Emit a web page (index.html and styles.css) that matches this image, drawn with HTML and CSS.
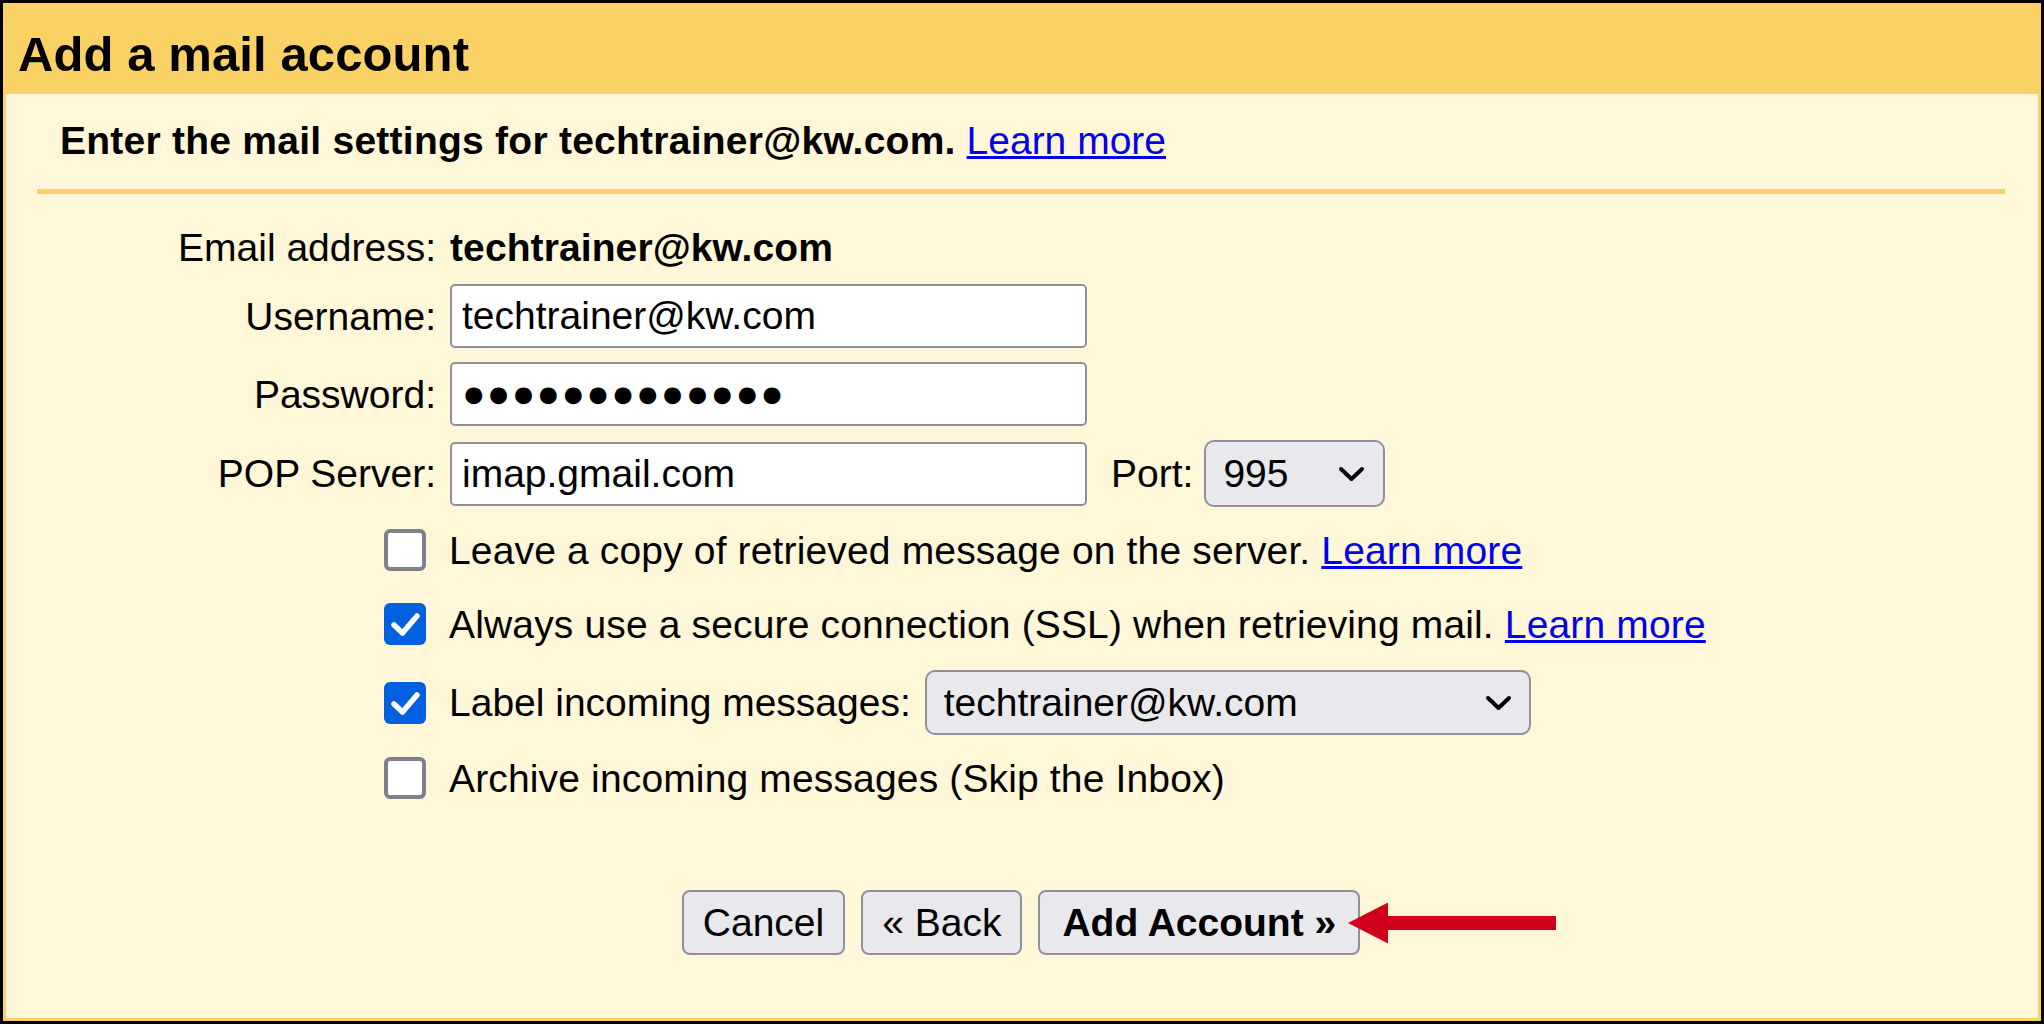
FILE: index.html
```html
<!DOCTYPE html>
<html lang="en">
<head>
<meta charset="utf-8">
<title>Add a mail account</title>
<link rel="stylesheet" href="styles.css">
</head>
<body>
<div class="frame">
  <div class="header">
    <h1 class="title">Add a mail account</h1>
  </div>
  <div class="content">
    <p class="intro"><b>Enter the mail settings for techtrainer@kw.com.</b> <a class="link" href="#">Learn more</a></p>
    <hr class="sep">
    <div class="form">
      <div class="lbl">Email address:</div>
      <div class="val"><b class="strong">techtrainer@kw.com</b></div>

      <label class="lbl" for="u">Username:</label>
      <div class="val"><input id="u" class="field" type="text" value="techtrainer@kw.com"></div>

      <label class="lbl" for="p">Password:</label>
      <div class="val"><input id="p" class="field pw" type="text" value="●●●●●●●●●●●●●"></div>

      <label class="lbl" for="s">POP Server:</label>
      <div class="val">
        <input id="s" class="field" type="text" value="imap.gmail.com">
        <span class="port-lbl">Port:</span>
        <span class="sel-wrap">
          <select class="sel port"><option>995</option></select>
          <svg class="chev" viewBox="0 0 27 16"><path d="M3 3 L13.5 13 L24 3"/></svg>
        </span>
      </div>
    </div>

    <div class="options">
      <div class="opt">
        <span class="cb"></span>
        <span class="opt-text">Leave a copy of retrieved message on the server. <a class="link" href="#">Learn more</a></span>
      </div>
      <div class="opt">
        <span class="cb on"><svg viewBox="0 0 42 42"><path d="M10 22 L18.5 30 L33 13"/></svg></span>
        <span class="opt-text">Always use a secure connection (SSL) when retrieving mail. <a class="link" href="#">Learn more</a></span>
      </div>
      <div class="opt">
        <span class="cb on"><svg viewBox="0 0 42 42"><path d="M10 22 L18.5 30 L33 13"/></svg></span>
        <span class="opt-flex"><span>Label incoming messages:</span><span class="sel-wrap label-wrap"><select class="sel label"><option>techtrainer@kw.com</option></select><svg class="chev" viewBox="0 0 27 16"><path d="M3 3 L13.5 13 L24 3"/></svg></span></span>
      </div>
      <div class="opt last">
        <span class="cb"></span>
        <span class="opt-text">Archive incoming messages (Skip the Inbox)</span>
      </div>
    </div>

    <div class="actions">
      <button class="btn" type="button">Cancel</button>
      <button class="btn" type="button">« Back</button>
      <span class="primary-wrap">
        <button class="btn primary" type="button">Add Account »</button>
        <svg class="arrow" viewBox="0 0 208 41"><polygon points="0,20.5 40,0 40,41"/><rect x="38" y="13.5" width="170" height="14"/></svg>
      </span>
    </div>
  </div>
</div>
</body>
</html>
```

FILE: styles.css
```css
body {
  margin: 0;
  background: #ffffff;
  font-family: "Liberation Sans", Arial, sans-serif;
  color: #000;
}

.frame {
  box-sizing: border-box;
  height: 1024px;
  border: 3px solid #000;
  background: #fad165;
  padding: 0 3px 3px;
  display: flex;
  flex-direction: column;
}

.header {
  box-sizing: border-box;
  height: 91px;
  padding: 24px 0 0 12px;
}

.title {
  margin: 0;
  font-size: 49px;
  line-height: 55px;
  font-weight: bold;
  letter-spacing: 0.1px;
}

.content {
  flex: 1;
  background: #fff7d7;
  padding: 24px 33px 0 31px;
}

.intro {
  margin: 0;
  font-size: 39px;
  line-height: 45px;
  padding-left: 23px;
}

.intro b {
  letter-spacing: 0.25px;
}

.strong {
  letter-spacing: 0.1px;
}

.link {
  color: #0000ee;
  text-decoration: underline;
}

.sep {
  border: 0;
  height: 5px;
  background: #fad165;
  margin: 26px 0 0;
}

.form {
  display: grid;
  grid-template-columns: 399px auto;
  column-gap: 14px;
  row-gap: 14px;
  margin-top: 31px;
  font-size: 39px;
  align-items: center;
}

.lbl {
  text-align: right;
  line-height: 45px;
}

.val {
  display: flex;
  align-items: center;
  line-height: 45px;
}

.field {
  box-sizing: border-box;
  width: 637px;
  height: 64px;
  border: 2px solid #8f8f9d;
  border-radius: 5px;
  background: #fff;
  font: 39px "Liberation Sans", Arial, sans-serif;
  color: #000;
  padding: 0 10px;
  margin: 0;
}

.pw {
  letter-spacing: 1.3px;
}

.port-lbl {
  margin-left: 24px;
  margin-right: 11px;
}

.sel-wrap {
  position: relative;
  display: inline-flex;
}

.sel {
  appearance: none;
  -webkit-appearance: none;
  box-sizing: border-box;
  height: 67px;
  border: 2px solid #8f8f9d;
  border-radius: 10px;
  background: #e9e9ed;
  font: 39px "Liberation Sans", Arial, sans-serif;
  color: #000;
  padding: 0 0 0 17px;
  margin: 0;
}

.sel.port {
  width: 181px;
}

.sel.label {
  width: 606px;
  height: 65px;
}

.chev {
  position: absolute;
  right: 20px;
  top: 50%;
  transform: translateY(-50%);
  width: 27px;
  height: 16px;
  pointer-events: none;
  fill: none;
  stroke: #000;
  stroke-width: 4;
  stroke-linecap: round;
  stroke-linejoin: round;
}

.label-wrap .chev {
  right: 19px;
}

.options {
  margin-top: 15px;
  padding-left: 347px;
  display: flex;
  flex-direction: column;
  gap: 18px;
  font-size: 39px;
}

.opt {
  display: flex;
  align-items: center;
  gap: 23px;
  min-height: 56px;
  line-height: 45px;
}

.opt.last {
  margin-top: -3px;
}

.opt-text {
  white-space: nowrap;
  letter-spacing: 0.15px;
}

.opt-flex {
  display: flex;
  align-items: center;
  gap: 14px;
  white-space: nowrap;
}

.cb {
  box-sizing: border-box;
  flex: none;
  width: 42px;
  height: 42px;
  border: 4px solid #80808a;
  border-radius: 6px;
  background: #fff;
}

.cb.on {
  border: 0;
  background: #0060df;
}

.cb svg {
  display: block;
  width: 42px;
  height: 42px;
  fill: none;
  stroke: #fff;
  stroke-width: 5.5;
  stroke-linecap: round;
  stroke-linejoin: round;
}

.actions {
  margin-top: 84px;
  display: flex;
  justify-content: center;
  gap: 16px;
}

.btn {
  box-sizing: border-box;
  height: 65px;
  border: 2px solid #8f8f9d;
  border-radius: 8px;
  background: #e9e9ed;
  font: 39px "Liberation Sans", Arial, sans-serif;
  color: #000;
  padding: 0 19px;
  margin: 0;
}

.btn.primary {
  font-weight: bold;
  padding: 0 22px;
}

.primary-wrap {
  position: relative;
  display: flex;
}

.arrow {
  position: absolute;
  left: calc(100% - 12px);
  top: 50%;
  transform: translateY(-50%);
  width: 208px;
  height: 41px;
  fill: #d0021b;
}
```
